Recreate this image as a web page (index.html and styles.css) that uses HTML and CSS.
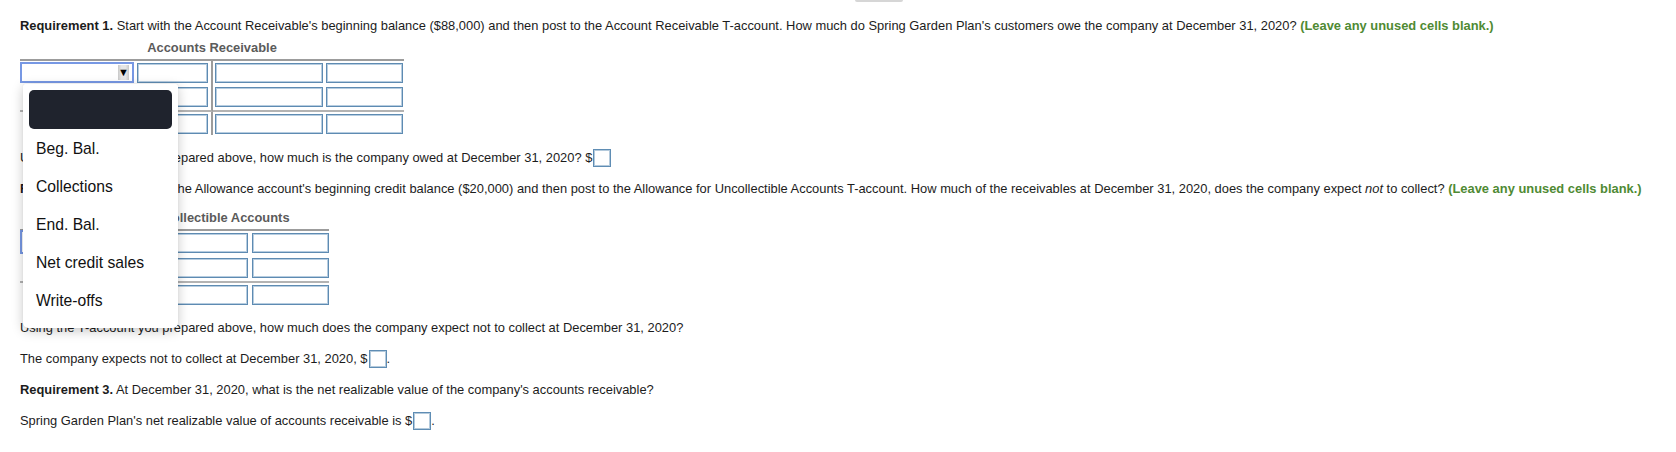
FILE: index.html
```html
<!DOCTYPE html>
<html>
<head>
<meta charset="utf-8">
<link rel="stylesheet" href="styles.css">
</head>
<body>
<div class="page">
  <div class="top-bar"></div>

  <p class="line first"><b>Requirement 1.</b> Start with the Account Receivable's beginning balance ($88,000) and then post to the Account Receivable T-account. How much do Spring Garden Plan's customers owe the company at December 31, 2020? <b class="hint">(Leave any unused cells blank.)</b></p>

  <div class="taccount t1">
    <div class="t-title">Accounts Receivable</div>
    <div class="t-grid">
      <div class="cell left r1"><div class="select focus"><span class="arrow">▼</span></div><div class="input w71"></div></div>
      <div class="cell right r1"><div class="input w108"></div><div class="input w77"></div></div>
      <div class="cell left r2"><div class="select inset"></div><div class="input w71"></div></div>
      <div class="cell right r2"><div class="input w108"></div><div class="input w77"></div></div>
      <div class="cell left r3"><div class="select inset"></div><div class="input w71"></div></div>
      <div class="cell right r3"><div class="input w108"></div><div class="input w77"></div></div>
    </div>
  </div>

  <p class="line">Using the T-account you prepared above, how much is the company owed at December 31, 2020? $<span class="answer"></span></p>

  <p class="line"><b>Requirement 2.</b> Start with the Allowance account's beginning credit balance ($20,000) and then post to the Allowance for Uncollectible Accounts T-account. How much of the receivables at December 31, 2020, does the company expect <i>not</i> to collect? <b class="hint">(Leave any unused cells blank.)</b></p>

  <div class="taccount t2">
    <div class="t-title">Allowance for Uncollectible Accounts</div>
    <div class="t-grid">
      <div class="cell left r1"><div class="select blue"></div><div class="input w40"></div></div>
      <div class="cell right r1"><div class="input w89"></div><div class="input w77"></div></div>
      <div class="cell left r2"><div class="select inset"></div><div class="input w40"></div></div>
      <div class="cell right r2"><div class="input w89"></div><div class="input w77"></div></div>
      <div class="cell left r3"><div class="select inset"></div><div class="input w40"></div></div>
      <div class="cell right r3"><div class="input w89"></div><div class="input w77"></div></div>
    </div>
  </div>

  <p class="line">Using the T-account you prepared above, how much does the company expect not to collect at December 31, 2020?</p>
  <p class="line">The company expects not to collect at December 31, 2020, $<span class="answer"></span>.</p>
  <p class="line"><b>Requirement 3.</b> At December 31, 2020, what is the net realizable value of the company's accounts receivable?</p>
  <p class="line">Spring Garden Plan's net realizable value of accounts receivable is $<span class="answer"></span>.</p>

  <div class="dropdown">
    <div class="dropdown-selected"></div>
    <ul class="dropdown-list">
      <li>Beg. Bal.</li>
      <li>Collections</li>
      <li>End. Bal.</li>
      <li>Net credit sales</li>
      <li>Write-offs</li>
    </ul>
  </div>
</div>
</body>
</html>
```

FILE: styles.css
```css
* { box-sizing: border-box; }

html, body {
  margin: 0;
  padding: 0;
  background: #ffffff;
}

body {
  font-family: "Liberation Sans", Arial, sans-serif;
  font-size: 12.9px;
  color: #1c1c1c;
}

.page {
  position: relative;
  padding-left: 20px;
  width: 1676px;
  height: 452px;
  overflow: hidden;
}

.top-bar {
  margin-left: 835px;
  width: 48px;
  height: 2px;
  background: #d6d6d6;
  border-radius: 0 0 2px 2px;
}

.line {
  margin: 14px 0 0;
  line-height: 16px;
  white-space: nowrap;
}

.line.first { margin-top: 16px; }

.hint { color: #4f8a33; }

.answer {
  display: inline-block;
  width: 18px;
  height: 18px;
  border: 1px solid #5f8db4;
  box-shadow: inset 0 0 0 1px #b4cadc;
  vertical-align: -5px;
  margin-left: 1px;
}

/* T-accounts */
.taccount { margin-top: 6px; }
.t1 { width: 384px; }
.t2 { width: 309px; margin-top: 13px; }

.t-title {
  text-align: center;
  font-weight: bold;
  color: #5b5b5b;
  line-height: 16px;
  margin-bottom: 3px;
}

.t-grid {
  display: grid;
  border-top: 2px solid #9c9c9c;
}
.t1 .t-grid { grid-template-columns: 193px 191px; }
.t2 .t-grid { grid-template-columns: 137px 172px; }

.cell {
  display: flex;
  gap: 3px;
  padding: 2px 0;
}
.cell.left { border-right: 2px solid #9c9c9c; }
.cell.right { padding-left: 2px; }
.t2 .cell.right { gap: 4px; }
.cell.r2 { border-bottom: 2px solid #b3b3b3; }
.cell.r3 { padding-bottom: 0; }

.input {
  height: 20px;
  border: 1px solid #5e8bb2;
  box-shadow: inset 0 0 0 1px #b7cde0;
  background: #fff;
}
.w71 { width: 71px; }
.w108 { width: 108px; }
.w77 { width: 77px; }
.w40 { width: 40px; }
.w89 { width: 89px; }

.select {
  position: relative;
  width: 114px;
  height: 21px;
  border: 1px solid #c8c8c8;
  background: #fff;
}
.t2 .select { width: 90px; }
.select.inset { margin-left: 4px; width: 110px; }
.t2 .select.inset { width: 86px; }
.select.focus {
  margin-top: -1px;
  border: 2px solid #7798e4;
}
.select.blue {
  margin-top: -3px;
  height: 24px;
  border: 2px solid #7798e4;
}

.arrow {
  position: absolute;
  right: 3px;
  top: 1px;
  width: 11px;
  height: 15px;
  background: linear-gradient(90deg, #c8c8c8 0, #e6e6e6 30%, #e6e6e6 70%, #c8c8c8 100%);
  font-size: 11px;
  line-height: 15px;
  text-align: center;
  color: #000;
}

/* open dropdown */
.dropdown {
  position: absolute;
  left: 23px;
  top: 84px;
  width: 155px;
  height: 244px;
  background: #fff;
  border-radius: 2px 2px 5px 5px;
  box-shadow: 0 3px 12px rgba(0, 0, 0, 0.22), 0 0 1px rgba(0, 0, 0, 0.15);
  padding: 6px 6px 0;
}

.dropdown-selected {
  height: 39px;
  border-radius: 5px;
  background: #1f232d;
  margin-bottom: 1px;
}

.dropdown-list {
  list-style: none;
  margin: 0;
  padding: 0 0 0 7px;
}

.dropdown-list li {
  font-size: 15.7px;
  line-height: 38px;
  height: 38px;
  color: #111;
  white-space: nowrap;
}
```
